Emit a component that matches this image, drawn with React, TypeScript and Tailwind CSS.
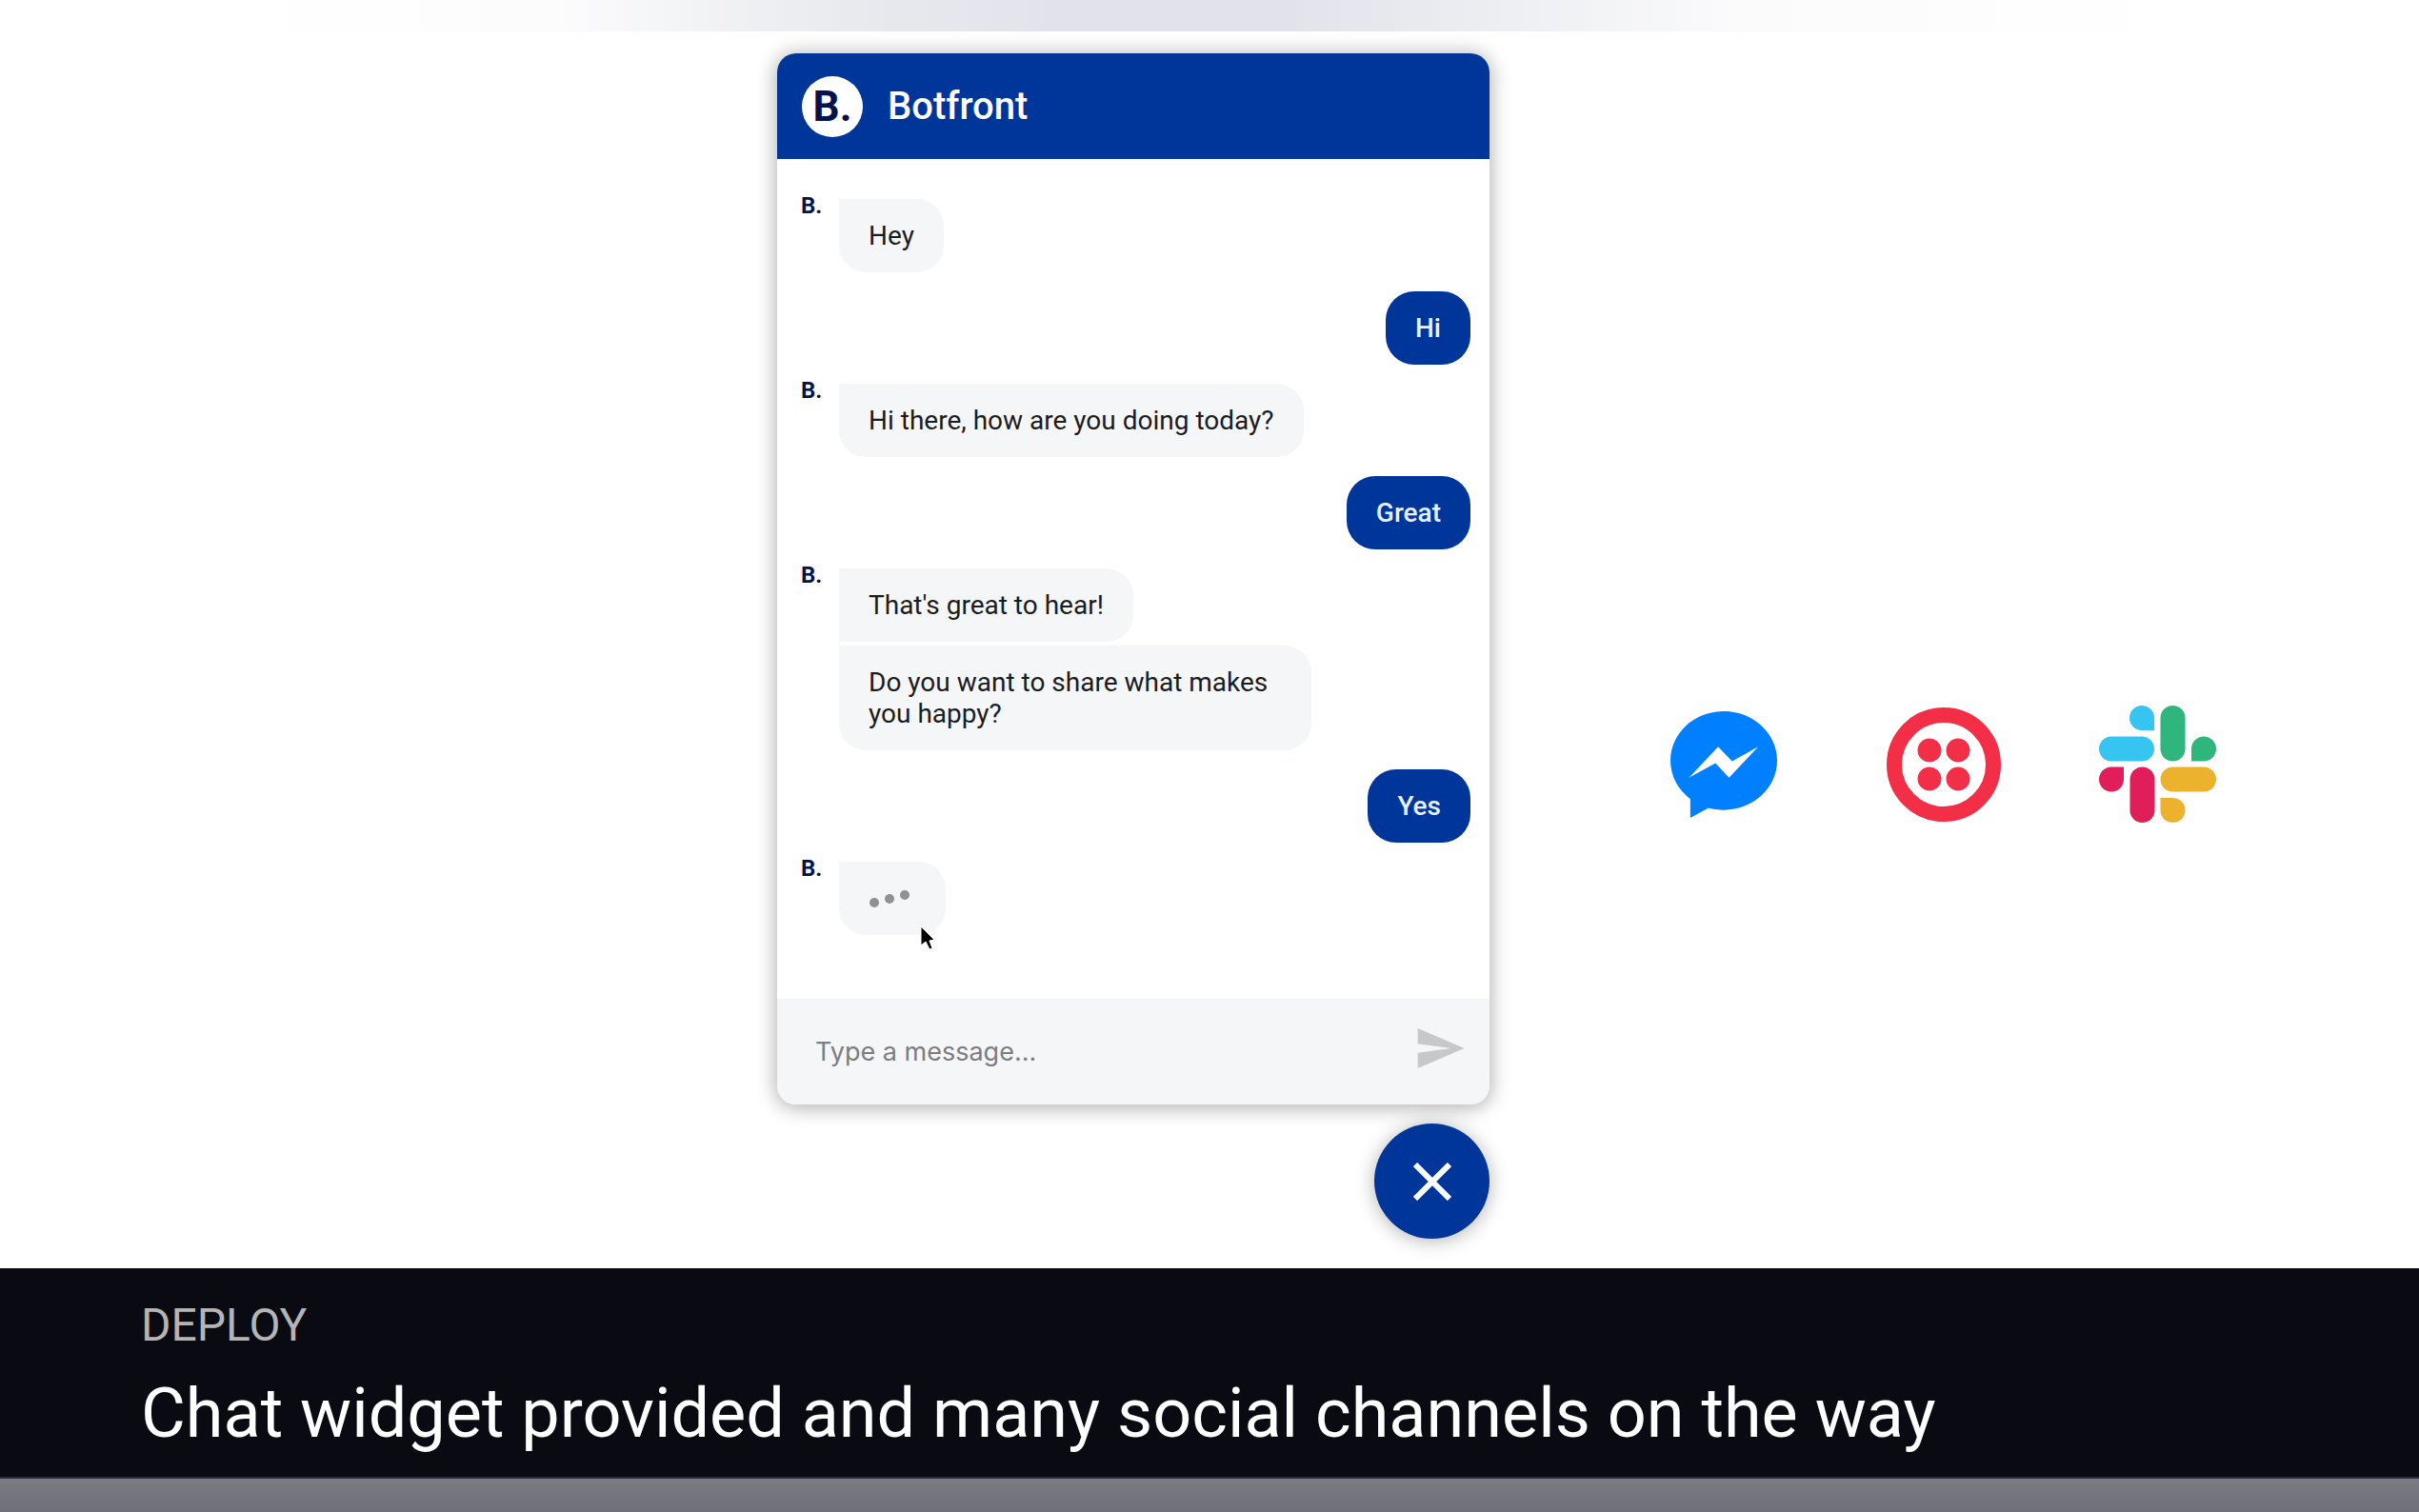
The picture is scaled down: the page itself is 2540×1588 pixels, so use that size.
import type { ReactNode } from "react";

function Avatar() {
  return (
    <span className="w-10 shrink-0 text-2xl leading-6 font-bold text-[#04134f]">
      B.
    </span>
  );
}

function BotRow({ children }: { children: ReactNode }) {
  return (
    <li className="mb-5 flex items-start">
      <Avatar />
      <div className="flex flex-col items-start gap-1 pt-[5px]">{children}</div>
    </li>
  );
}

function BotBubble({
  children,
  grouped,
}: {
  children: ReactNode;
  grouped?: boolean;
}) {
  return (
    <p
      className={
        "max-w-[496px] rounded-r-[28px] bg-[#f5f6f8] px-[31px] py-[22px] " +
        (grouped ? "" : "rounded-bl-[28px]")
      }
    >
      {children}
    </p>
  );
}

function UserRow({ children }: { children: ReactNode }) {
  return (
    <li className="mb-[15px] flex justify-end">
      <p className="rounded-[30px] bg-[#00369a] px-[31px] py-[22px] font-medium text-[#e8f0ff]">
        {children}
      </p>
    </li>
  );
}

function TypingBubble() {
  return (
    <div className="relative rounded-r-[28px] rounded-bl-[28px] bg-[#f5f6f8] px-[31px] py-[22px]">
      <svg className="h-[33px] w-[50px]" viewBox="0 0 50 33" fill="#8f9194">
        <circle cx="6" cy="21" r="5" />
        <circle cx="22" cy="17" r="5" />
        <circle cx="38" cy="13" r="5" />
      </svg>
      <svg
        className="absolute top-[66px] left-[84px] h-[30px] w-[22px]"
        viewBox="0 0 22 30"
      >
        <path
          d="M2 2v20l5-4 4 8 3-1-3-8 5-1z"
          fill="#000"
          stroke="#fff"
          strokeWidth="1"
        />
      </svg>
    </div>
  );
}

function ChatWidget() {
  return (
    <div className="flex flex-col items-end gap-5">
      <div className="w-full overflow-hidden rounded-[20px] bg-white shadow-[0_2px_20px_2px_rgba(0,0,0,0.3)]">
        <header className="flex h-[111px] items-center gap-[26px] bg-[#00369a] px-[26px]">
          <span className="flex size-16 items-center justify-center rounded-full bg-white text-[44px] leading-none font-bold text-[#04134f]">
            B.
          </span>
          <h1 className="text-[40px] leading-[48px] font-medium text-white">
            Botfront
          </h1>
        </header>

        <ul className="pt-[37px] pr-5 pb-[47px] pl-[25px] text-[28px] leading-[33px] text-[#1c1c1e]">
          <BotRow>
            <BotBubble>Hey</BotBubble>
          </BotRow>
          <UserRow>Hi</UserRow>
          <BotRow>
            <BotBubble>Hi there, how are you doing today?</BotBubble>
          </BotRow>
          <UserRow>Great</UserRow>
          <BotRow>
            <BotBubble grouped>That's great to hear!</BotBubble>
            <BotBubble>Do you want to share what makes you happy?</BotBubble>
          </BotRow>
          <UserRow>Yes</UserRow>
          <BotRow>
            <TypingBubble />
          </BotRow>
        </ul>

        <form className="flex h-[111px] items-center bg-[#f5f6f8] pr-6 pl-10">
          <input
            type="text"
            aria-label="Message"
            placeholder="Type a message..."
            className="min-w-0 flex-1 font-['Inter',sans-serif] text-[27px] leading-[34px] outline-none placeholder:text-[#7d7d7f]"
          />
          <button type="button" aria-label="Send" className="pb-2">
            <svg className="size-14" viewBox="0 0 24 24" fill="#c6c8c9">
              <path d="M2.01 21 23 12 2.01 3 2 10l15 2-15 2z" />
            </svg>
          </button>
        </form>
      </div>

      <button
        type="button"
        aria-label="Close chat"
        className="flex size-[121px] items-center justify-center rounded-full bg-[#00369a] shadow-[0_2px_20px_rgba(0,0,0,0.3)]"
      >
        <svg
          className="size-10"
          viewBox="0 0 40 40"
          stroke="#fff"
          strokeWidth="6"
        >
          <path d="M2 2 38 38M38 2 2 38" />
        </svg>
      </button>
    </div>
  );
}

function MessengerLogo() {
  return (
    <svg className="size-28" viewBox="0 0 24 24" fill="#0080ff">
      <path d="M12 0C5.373 0 0 4.974 0 11.111c0 3.498 1.744 6.614 4.469 8.654V24l4.088-2.242c1.092.3 2.246.464 3.443.464 6.627 0 12-4.975 12-11.11S18.627 0 12 0zm1.191 14.963-3.055-3.26-5.963 3.26L10.732 8l3.131 3.259L19.752 8l-6.561 6.963z" />
    </svg>
  );
}

function TwilioLogo() {
  return (
    <svg className="size-[120px]" viewBox="0 0 120 120" fill="#f22f46">
      <circle cx="60" cy="60" r="52" fill="none" stroke="#f22f46" strokeWidth="16" />
      <circle cx="45" cy="45" r="12.5" />
      <circle cx="75" cy="45" r="12.5" />
      <circle cx="45" cy="75" r="12.5" />
      <circle cx="75" cy="75" r="12.5" />
    </svg>
  );
}

function SlackLogo() {
  return (
    <svg className="size-[123px]" viewBox="0 0 123 123">
      <g fill="#36c5f0">
        <path d="M58 26H45a13 13 0 1 1 13-13z" />
        <rect y="32.5" width="58" height="26" rx="13" />
      </g>
      <g fill="#2eb67d">
        <rect x="64.5" width="26" height="58.5" rx="13" />
        <path d="M97 58.5v-13a13 13 0 1 1 13 13z" />
      </g>
      <g fill="#e01e5a">
        <path d="M26 64.5v13a13 13 0 1 1-13-13z" />
        <rect x="32.5" y="64.5" width="26" height="58.5" rx="13" />
      </g>
      <g fill="#ecb22e">
        <rect x="64.5" y="64.5" width="58.5" height="26" rx="13" />
        <path d="M64.5 97h13a13 13 0 1 1-13 13z" />
      </g>
    </svg>
  );
}

export default function App() {
  return (
    <div className="flex min-h-screen flex-col bg-white font-['Roboto',sans-serif]">
      <div className="h-[33px] bg-[linear-gradient(90deg,#fff_10%,#fcfcfd_23%,#e9eaee_35%,#e2e2ec_44%,#e2e2ec_53%,#ecedf1_61%,#fbfbfc_72%,#fff_90%)]" />

      <main className="grid flex-1 grid-cols-[816fr_748fr_976fr] pt-[23px] pb-7">
        <div className="col-start-2">
          <ChatWidget />
        </div>
        <div className="grid grid-cols-[227px_223px_123px] items-center self-start pt-[685px] pl-[190px]">
          <MessengerLogo />
          <TwilioLogo />
          <SlackLogo />
        </div>
      </main>

      <footer>
        <div className="border-b-2 border-[#2e2848] bg-[#090a12] px-[148px] pt-8 pb-6">
          <p className="mb-[23px] text-5xl leading-[56px] text-[#b4b4b6]">
            DEPLOY
          </p>
          <h2 className="text-7xl leading-[84px] text-white">
            Chat widget provided and many social channels on the way
          </h2>
        </div>
        <div className="h-[35px] bg-linear-to-b from-[#7b7b82] to-[#6f6f78]" />
      </footer>
    </div>
  );
}
